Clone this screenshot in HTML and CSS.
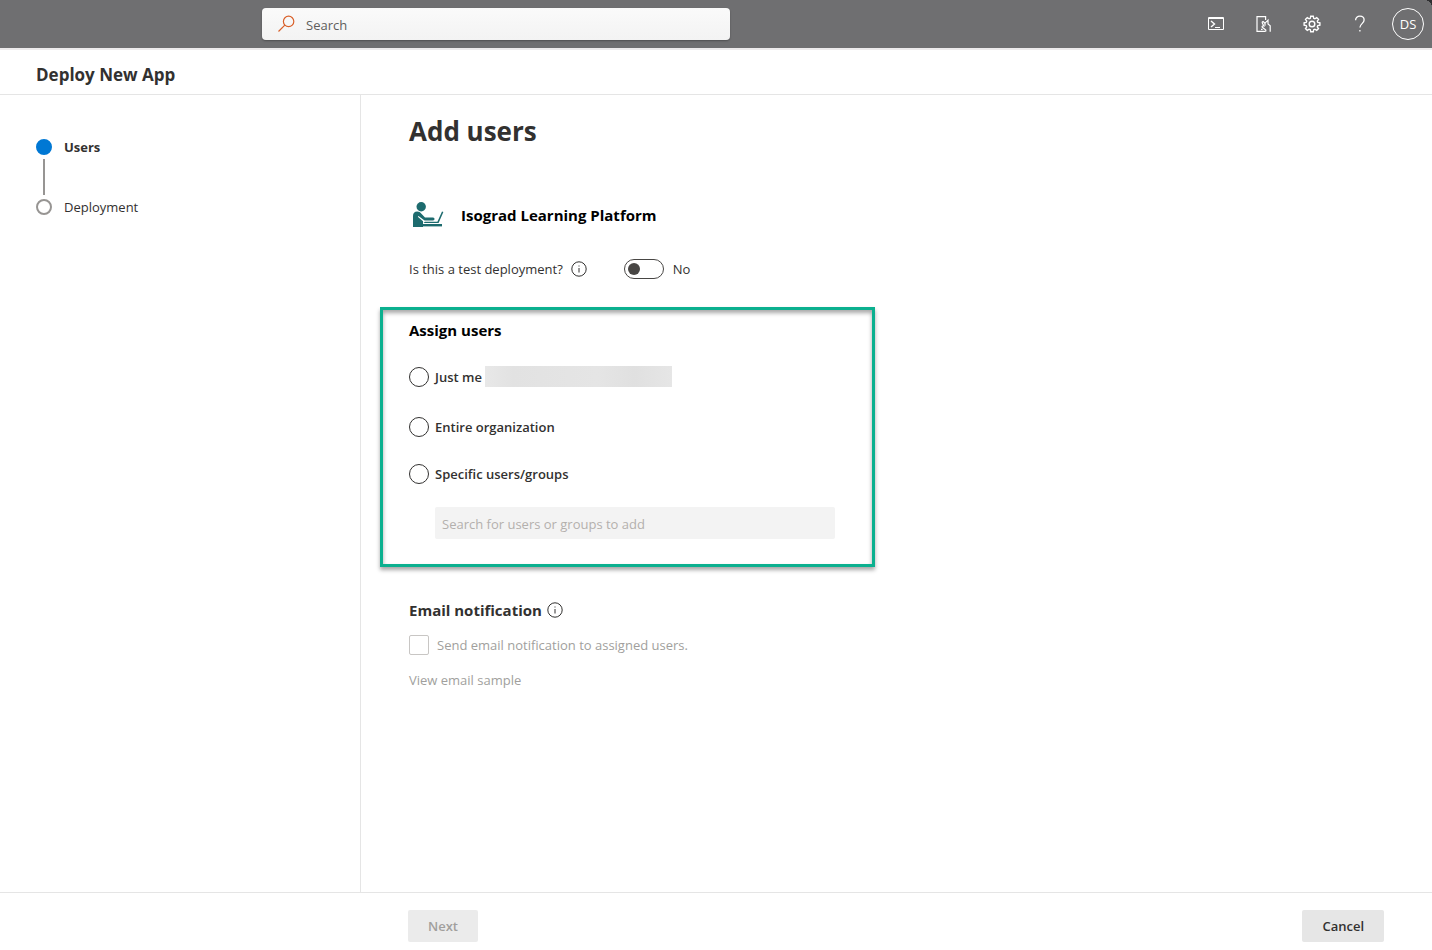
FILE: index.html
```html
<!DOCTYPE html>
<html lang="en">
<head>
  <meta charset="UTF-8" />
  <meta name="viewport" content="width=device-width, initial-scale=1" />
  <title>Deploy New App</title>
  <link rel="stylesheet" href="styles.css">
</head>
<body>

  <header class="topbar">
    <form class="search" role="search">
      <svg width="18" height="18" viewBox="0 0 18 18" fill="none" stroke="#d9602a" stroke-width="1.2" aria-hidden="true">
        <circle cx="10.6" cy="6.4" r="5.2" />
        <path d="M6.8 10.2L0.5 16.5" />
      </svg>
      <input type="search" placeholder="Search" aria-label="Search">
    </form>
    <nav class="tools">
      <button type="button" aria-label="Cloud Shell">
        <svg width="18" height="18" viewBox="0 0 18 18" fill="none" stroke="currentColor">
          <path d="M1.5 2.5h15v12h-15z M1.5 3.5h15" />
          <path d="M4 6l3.500 3L4 12" stroke-width="1.4" />
          <path d="M8 12.500h5" />
        </svg>
      </button>
      <button type="button" aria-label="Mobile app">
        <svg width="18" height="18" viewBox="0 0 18 18" fill="none" stroke="currentColor" stroke-width="1.2">
          <path d="M10.600 5V1.600H2V16.400h8.600" />
          <path d="M10 10.800V8.200L13 5.200V9l2.200 1.800v6" />
          <path d="M10 8.200L8.200 6.600c-1.200 0-1.200 1-.6 2l1.200 2.400c-1.400-.4-2.400.6-1.200 1.600l3.200 2.400v1.400" />
          <path d="M6 14.400h1.600" />
        </svg>
      </button>
      <button type="button" aria-label="Settings">
        <svg width="18" height="18" viewBox="0 0 18 18" fill="none" stroke="currentColor" stroke-width="1.4">
          <path d="M7.700 1.200h2.600l.4 2.100 1.200.5 1.800-1.200 1.800 1.800-1.200 1.800.5 1.200 2.100.4v2.400l-2.100.4-.5 1.200 1.200 1.800-1.800 1.800-1.800-1.200-1.200.5-.4 2.100H7.700l-.4-2.100-1.200-.5-1.800 1.200-1.800-1.800 1.200-1.800-.5-1.200-2.100-.4V7.800l2.100-.4.5-1.200-1.200-1.800 1.800-1.800 1.800 1.200 1.200-.5z" />
          <circle cx="9" cy="9" r="2.800" />
        </svg>
      </button>
      <button type="button" aria-label="Help">
        <svg width="18" height="18" viewBox="0 0 18 18" fill="none" stroke="currentColor" stroke-width="1.3">
          <path d="M4.600 5.200C4.600 2.800 6.500 1.200 8.900 1.200s4.200 1.500 4.200 3.900c0 3.300-4.200 3.800-4.200 7.400" />
          <path d="M8.900 15v1.600" />
        </svg>
      </button>
    </nav>
    <button type="button" class="avatar" aria-label="Account manager">DS</button>
  </header>

  <div class="title-row">
    <h2>Deploy New App</h2>
  </div>

  <div class="wizard">
    <aside>
      <ol class="steps">
        <li class="step current" aria-current="step"><span class="dot"></span>Users</li>
        <li class="line" aria-hidden="true"></li>
        <li class="step"><span class="dot"></span>Deployment</li>
      </ol>
    </aside>

    <main>
      <h1>Add users</h1>

      <div class="app">
        <svg width="36" height="36" viewBox="0 0 36 36" fill="#1d6b6e" aria-hidden="true">
          <circle cx="12.2" cy="9.800" r="4.700" />
          <path d="M4 30V19c0-2.800 1.500-4.400 4.200-4.400 2 0 3 .8 4.200 2.200l3.600 3.800h8c2 0 2 3 0 3h-8.500l-6-4.700-.7.800 5.200 4.600V30z" />
          <path d="M16 24.700h12.400l4.600-10.200 1.400.4-4.800 11.200H14.500z" />
          <path d="M13.500 27h19.500v2.400H13.500z" />
        </svg>
        <h3>Isograd Learning Platform</h3>
      </div>

      <div class="test-row">
        <label for="test">Is this a test deployment?</label>
        <button type="button" class="info" aria-label="About test deployments">
          <svg width="16" height="16" viewBox="0 0 16 16" fill="none" stroke="currentColor">
            <circle cx="8" cy="8" r="7.200" />
            <path d="M8 7v4.500M8 4.500v1" />
          </svg>
        </button>
        <input type="checkbox" role="switch" id="test" class="toggle">
        <span>No</span>
      </div>

      <fieldset class="assign">
        <h3>Assign users</h3>
        <label class="option me"><input type="radio" name="assign" value="me">Just me <span class="account"></span></label>
        <label class="option"><input type="radio" name="assign" value="all">Entire organization</label>
        <label class="option"><input type="radio" name="assign" value="some">Specific users/groups</label>
        <input type="text" class="people" placeholder="Search for users or groups to add" aria-label="Search for users or groups to add" disabled>
      </fieldset>

      <section class="email">
        <div class="email-head">
          <h3>Email notification</h3>
          <button type="button" class="info" aria-label="About email notification">
            <svg width="16" height="16" viewBox="0 0 16 16" fill="none" stroke="currentColor">
              <circle cx="8" cy="8" r="7.200" />
              <path d="M8 7v4.500M8 4.500v1" />
            </svg>
          </button>
        </div>
        <label class="check"><input type="checkbox" disabled>Send email notification to assigned users.</label>
        <a href="#" class="sample">View email sample</a>
      </section>
    </main>
  </div>

  <footer>
    <button type="button" class="btn" disabled>Next</button>
    <button type="button" class="btn">Cancel</button>
  </footer>

</body>
</html>
```
FILE: styles.css
```css
* {
  margin: 0;
  padding: 0;
  box-sizing: border-box;
}

body {
  display: flex;
  flex-direction: column;
  min-height: 100vh;
  background: #fff;
  color: #323130;
  font-family: "Open Sans", "Noto Sans", sans-serif;
  font-size: 13px;
  line-height: 20px;
}

button,
input {
  font: inherit;
  color: inherit;
}

button {
  border: none;
  background: none;
  cursor: pointer;
}

h3 {
  font-size: 15px;
  font-weight: 700;
  line-height: 20px;
}

/* top bar */
.topbar {
  position: relative;
  display: flex;
  align-items: center;
  height: 50px;
  padding: 0 8px 0 262px;
  background: #6f6f71;
  border-bottom: 2px solid #edebec;
  color: #fff;
}

/* dark notch in the top right corner */
.topbar::after {
  content: "";
  position: absolute;
  top: 0;
  right: 0;
  width: 8px;
  height: 8px;
  background: radial-gradient(circle at 0 100%, transparent 8px, #2f2f31 8px);
}

.search {
  display: flex;
  align-items: center;
  gap: 10px;
  width: 468px;
  height: 32px;
  padding: 0 16px;
  background: linear-gradient(#fafafa, #f3f3f3);
  border-radius: 4px;
  box-shadow: 0 1px 2px rgba(0, 0, 0, 0.3);
}

.search input {
  flex: 1;
  padding-top: 2px;
  border: none;
  outline: none;
  background: none;
  color: #605e5c;
}

.search input::placeholder {
  color: #605e5c;
}

.tools {
  display: flex;
  margin-left: auto;
}

.tools button {
  display: grid;
  place-items: center;
  width: 48px;
  height: 48px;
}

.avatar {
  width: 32px;
  height: 32px;
  margin-left: 8px;
  border: 1px solid #fff;
  border-radius: 50%;
  color: #fff;
}

/* page title */
.title-row {
  height: 45px;
  padding: 13px 36px 7px;
  border-bottom: 1px solid #e5e5e5;
}

.title-row h2 {
  font-size: 17px;
  font-weight: 700;
  line-height: 24px;
}

.wizard {
  display: grid;
  grid-template-columns: 361px 1fr;
  flex: 1;
}

/* steps */
aside {
  padding: 42px 36px;
  border-right: 1px solid #e5e5e5;
}

.steps {
  list-style: none;
}

.step {
  display: flex;
  align-items: center;
  gap: 12px;
}

.dot {
  width: 16px;
  height: 16px;
  border: 2px solid #979593;
  border-radius: 50%;
}

.current {
  font-weight: 700;
}

.current .dot {
  background: #0078d4;
  border-color: #0078d4;
}

.line {
  width: 2px;
  height: 36px;
  margin: 2px 7px;
  background: #979593;
}

/* form */
main {
  padding: 18px 48px;
}

h1 {
  font-size: 26px;
  font-weight: 700;
  line-height: 36px;
}

.app {
  display: flex;
  align-items: center;
  gap: 16px;
  margin-top: 48px;
  color: #000;
}

.test-row {
  display: flex;
  align-items: center;
  margin-top: 26px;
}

.test-row label {
  margin-right: 3px;
}

.info {
  display: flex;
  margin-left: 5px;
}

.toggle {
  appearance: none;
  width: 40px;
  height: 20px;
  margin: 0 9px 0 37px;
  padding: 3px;
  border: 1px solid #484644;
  border-radius: 10px;
}

.toggle::before {
  content: "";
  display: block;
  width: 12px;
  height: 12px;
  border-radius: 50%;
  background: #484644;
}

.toggle:checked::before {
  margin-left: auto;
}

.assign {
  width: 495px;
  max-width: 100%;
  margin: 28px 0 0 -29px;
  padding: 10px 26px 25px;
  border: 3px solid #0bb08f;
  box-shadow: 0 3px 4px rgba(0, 0, 0, 0.35), inset 0 3px 4px rgba(0, 0, 0, 0.35);
}

.assign h3 {
  margin-bottom: 23px;
  color: #000;
}

.option {
  display: flex;
  align-items: center;
  gap: 6px;
  height: 27px;
  margin-bottom: 20px;
  font-weight: 600;
}

.option.me {
  margin-bottom: 23px;
}

.option input {
  appearance: none;
  width: 20px;
  height: 20px;
  border: 1px solid #323130;
  border-radius: 50%;
}

.option input:checked {
  border-width: 6px;
}

.account {
  width: 187px;
  height: 21px;
  margin-left: -3px;
  background: linear-gradient(90deg, #e8e8e8, #e2e2e2 15%, #e5e5e5 60%, #e0e0e0 80%, #e6e6e6);
}

.people {
  display: block;
  width: 400px;
  max-width: 100%;
  height: 32px;
  margin-left: 26px;
  padding: 2px 7px 0;
  border: none;
  border-radius: 2px;
  background: #f3f3f3;
}

.people::placeholder {
  color: #b3b0ad;
}

.email {
  margin-top: 33px;
}

.email-head {
  display: flex;
  align-items: center;
}

.check {
  display: flex;
  align-items: center;
  gap: 8px;
  margin-top: 15px;
  color: #a19f9d;
}

.check input {
  appearance: none;
  width: 20px;
  height: 20px;
  border: 1px solid #c8c6c4;
  border-radius: 2px;
}

.sample {
  display: inline-block;
  margin-top: 15px;
  color: #a19f9d;
  text-decoration: none;
}

/* footer */
footer {
  display: flex;
  justify-content: space-between;
  height: 58px;
  padding: 17px 48px 8px 408px;
  border-top: 1px solid #e5e5e5;
}

.btn {
  height: 32px;
  padding: 0 20px;
  border-radius: 2px;
  background: #e6e6e6;
  font-weight: 600;
}

.btn:disabled {
  background: #ebebeb;
  color: #a19f9d;
  cursor: default;
}
```
